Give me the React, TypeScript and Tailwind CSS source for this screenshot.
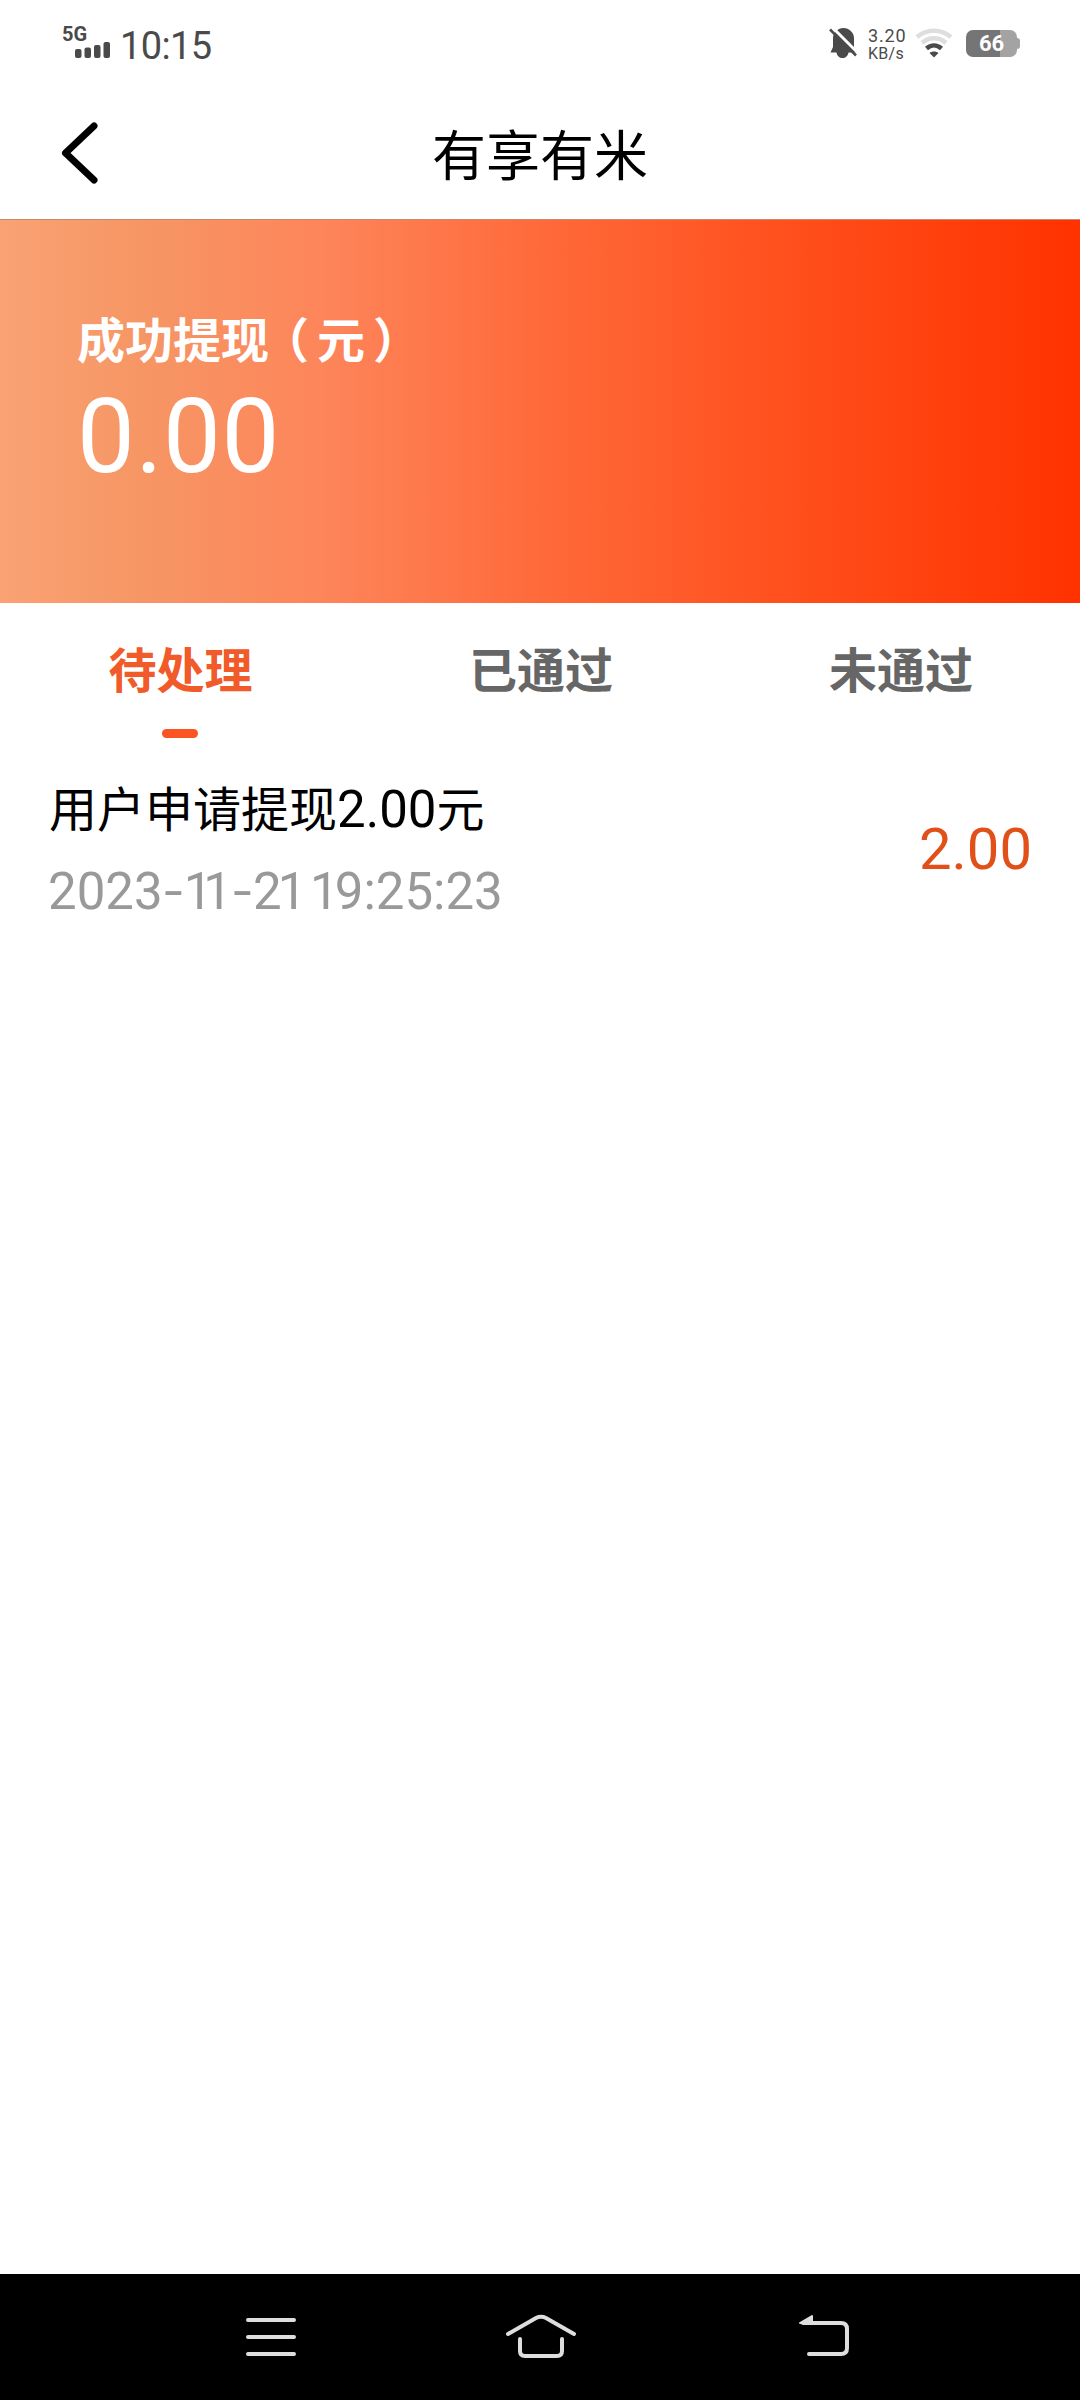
import React from 'react';

const tabs = ['待处理', '已通过', '未通过'];

const records = [
    { title: '用户申请提现', value: '2.00', date: '2023-11-21', time: '19:25:23' },
];

const StatusBar = () => {
    return (
        <div className="flex h-[90px] items-start justify-between pl-[62px] pr-[60px] text-[#4a4a4a]">
            <div className="flex pt-[26px]">
                <div className="w-[50px]">
                    <p className="h-[15px] text-[20px] leading-[17px] font-bold">5G</p>
                    <svg width="50" height="18" viewBox="0 0 50 18" fill="currentColor">
                        <rect x="13" y="8" width="6.500" height="9" rx="2" />
                        <rect x="22.5" y="6.5" width="6.500" height="10.5" rx="2" />
                        <rect x="32" y="4" width="6.500" height="13" rx="2" />
                        <rect x="41.5" y="1" width="6.500" height="16" rx="2" />
                    </svg>
                </div>
                <p className="pl-[8px] pt-[1px] text-[38px] leading-[38px] tracking-[-0.6px]">10:15</p>
            </div>

            <div className="flex pt-[26px]">
                <svg className="-ml-[2px] mr-[2px]" width="30" height="34" viewBox="0 0 30 34">
                    <path
                        d="M15.5 2C21 2 26 6.500 26 12V21L28.500 26.500H20.500C20 30 17.500 32 14.500 32C11.500 32 9 30 8.500 26.500H2.500L5 21V12C5 6.500 10 2 15.500 2Z"
                        fill="#4a4a4a"
                    />
                    <path d="M4 1L30 27" stroke="#fff" strokeWidth="3" />
                    <path d="M2 3.500L28 29.500" stroke="#4a4a4a" strokeWidth="2.500" />
                </svg>
                <div className="w-[48px] pl-[8px]">
                    <p className="pt-[1px] text-[18px] leading-[18px] tracking-[0.8px]">3.20</p>
                    <p className="pt-[1px] text-[16px] leading-[16px] tracking-[0.3px]">KB/s</p>
                </div>
                <svg className="ml-[7px] mr-[1px]" width="38" height="34" viewBox="0 0 38 34" fill="none">
                    <path d="M2 11C11.500 2.500 26.500 2.500 36 11" stroke="#dedede" strokeWidth="4.500" />
                    <path d="M7 17C14 10.500 24 10.500 31 17" stroke="#dedede" strokeWidth="4.500" />
                    <path d="M11.500 22.500C16 18.500 22 18.500 26.500 22.500" stroke="#4a4a4a" strokeWidth="4.500" />
                    <path d="M14.500 27C17 25 21 25 23.500 27L19 31.500Z" fill="#4a4a4a" />
                </svg>
                <div className="ml-[12px] mt-[4px] flex h-[27px] items-center">
                    <div className="h-[27px] w-[51px] rounded-[7px] bg-[linear-gradient(90deg,#757575_34px,#a3a3a3_34px)] text-center text-[22px] leading-[28px] font-bold text-white">
                        66
                    </div>
                    <div className="h-[11px] w-[3px] rounded-r-[3px] bg-[#a3a3a3]" />
                </div>
            </div>
        </div>
    );
};

const Header = () => {
    return (
        <header className="relative flex h-[129px] items-center justify-center">
            <button className="absolute left-[60px] top-[30px]">
                <svg width="40" height="66" viewBox="0 0 40 66" fill="none">
                    <path d="M34 6L5.500 33L34 60" stroke="#000" strokeWidth="7" strokeLinecap="round" strokeLinejoin="round" />
                </svg>
            </button>
            <h1 className="pt-[7px] text-[54px] leading-[122px] text-black">有享有米</h1>
        </header>
    );
};

// the figure 1 is set narrower than the other digits, dashes a little wider
const DateTime = ({ date, time }: { date: string; time: string }) => {
    const text = `${date} ${time}`;
    return (
        <p className="pt-[3px] text-[51px] leading-[80px] whitespace-pre text-[#999]">
            {text.split('').map((char, i) => {
                const next = text[i + 1];
                if (char === '-') {
                    return (
                        <span key={i} className="inline-block w-[21px] origin-center scale-x-130 text-center">
                            -
                        </span>
                    );
                }
                if (char === '1' && (next === '1' || next === ' ')) {
                    return <span key={i} className="tracking-[-9px]">1</span>;
                }
                if ((char === '1' && next === '9') || (char === '2' && next === '1')) {
                    return <span key={i} className="tracking-[-4px]">{char}</span>;
                }
                return char;
            })}
        </p>
    );
};

const App = () => {
    return (
        <div className="flex h-[2400px] w-[1080px] flex-col bg-white font-[Roboto,'Noto_Sans_CJK_SC',sans-serif]">
            <StatusBar />
            <Header />

            <section className="h-[384px] border-t border-[#c98a6c] bg-[linear-gradient(90deg,#faa274_0%,#f69765_12%,#fd855a_30%,#ff6a3a_50%,#ff4d1a_75%,#ff3200_100%)] pl-[77px] pt-[87px] text-white">
                <h2 className="text-[48px] leading-[70px] font-bold">
                    成功提<span className="tracking-[-8px]">现</span>
                    <span className="tracking-[8px]">（元</span>）
                </h2>
                <p className="text-[103px] leading-[120px] tracking-[0.5px]">0.00</p>
            </section>

            <nav className="flex h-[147px]">
                {tabs.map((tab, i) => (
                    <div key={tab} className="flex flex-1 flex-col items-center pt-[34px]">
                        <span className={i === 0 ? 'pl-[1px] text-[48px] leading-[70px] font-bold text-[#f15a29]' : 'pl-[2px] text-[48px] leading-[70px] font-bold text-[#666]'}>
                            {tab}
                        </span>
                        {i === 0 && <span className="mt-[22px] h-[9px] w-[36px] rounded-full bg-[#fa5523]" />}
                    </div>
                ))}
            </nav>

            <main className="flex-1">
                {records.map((item) => (
                    <div key={item.time} className="flex items-center justify-between pl-[48px] pr-[48px] pt-[22px]">
                        <div>
                            <p className="pl-[1px] text-[48px] leading-[76px] text-black">
                                {item.title}
                                <span className="text-[51px]">{item.value}</span>元
                            </p>
                            <DateTime date={item.date} time={item.time} />
                        </div>
                        <span className="pb-[6px] text-[58px] leading-[60px] text-[#e2501a]">{item.value}</span>
                    </div>
                ))}
            </main>

            <footer className="flex h-[126px] items-center bg-black pl-[244px]">
                <svg width="54" height="46" viewBox="0 0 54 46" stroke="#dedede" strokeWidth="4" strokeLinecap="round">
                    <path d="M4 6H50M4 23H50M4 40H50" />
                </svg>
                <svg className="ml-[207px]" width="72" height="46" viewBox="0 0 72 46" fill="none" stroke="#dedede" strokeWidth="4" strokeLinecap="round">
                    <path d="M3 20L31 4Q36 1.500 41 4L69 20" />
                    <path d="M15 25V37Q15 42 20 42H52Q57 42 57 37V25" />
                </svg>
                <svg className="ml-[220px]" width="54" height="46" viewBox="0 0 54 46" fill="none" stroke="#dedede" strokeWidth="4" strokeLinecap="round">
                    <path d="M6 9H44Q50 9 50 15V34Q50 40 44 40H12" />
                    <path d="M15 2V9H3Z" fill="#dedede" strokeWidth="2" strokeLinejoin="round" />
                </svg>
            </footer>
        </div>
    );
};

export default App;
